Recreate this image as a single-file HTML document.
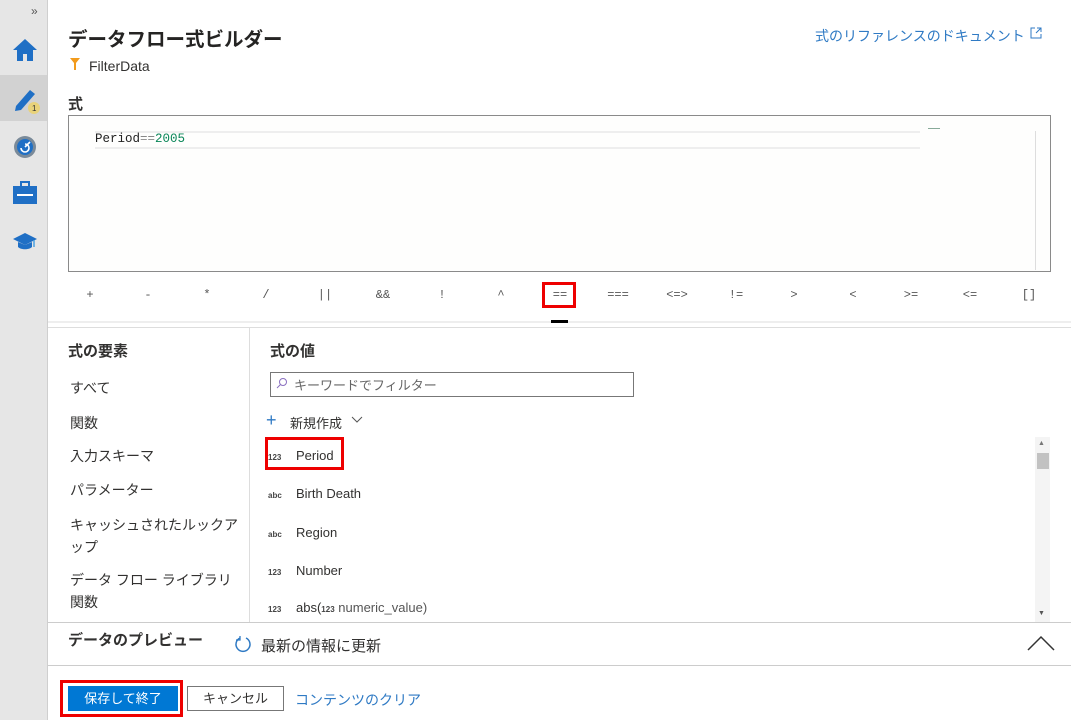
<!DOCTYPE html>
<html><head><meta charset="utf-8"><style>
*{margin:0;padding:0;box-sizing:border-box}
body{width:1071px;height:720px;position:relative;overflow:hidden;background:#fff;font-family:"Liberation Sans","Noto Sans CJK JP",sans-serif;color:#323130}
.a{position:absolute;white-space:nowrap}
.op{position:absolute;top:288px;font-family:"Liberation Mono",monospace;font-size:12px;color:#555;transform:translateX(-50%)}
.it{position:absolute;left:70px;font-size:14px;color:#323130}
.ty{position:absolute;left:268px;font-size:8px;color:#444;font-weight:bold}
.nm{position:absolute;left:296px;font-size:13px;color:#323130}
</style></head><body>
<div class="a" style="left:0;top:0;width:48px;height:720px;background:#e6e6e6;border-right:1px solid #cfcfcf"></div>
<div class="a" style="left:0;top:75px;width:47px;height:46px;background:#d2d2d2"></div>
<div class="a" style="left:31px;top:4px;font-size:12px;color:#555">»</div>
<svg class="a" style="left:12px;top:38px" width="26" height="24" viewBox="0 0 26 24"><path d="M13 1L1 12h4v11h6v-7h4v7h6V12h4z" fill="#1f6fc5"/></svg>
<svg class="a" style="left:12px;top:84px" width="30" height="30" viewBox="0 0 30 30"><path d="M4 22L18 6l5 4L9 26l-6 1z" fill="#1f6fc5"/><circle cx="22" cy="24" r="6" fill="#e8d27a"/><text x="20" y="27" font-size="8" fill="#333">1</text></svg>
<svg class="a" style="left:13px;top:135px" width="24" height="24"><circle cx="12" cy="12" r="11" fill="#7a8a99"/><circle cx="12" cy="12" r="8" fill="#1f6fc5"/><path d="M8 13a4 4 0 1 0 4-4M12 12l5-5" stroke="#fff" stroke-width="1.6" fill="none"/></svg>
<svg class="a" style="left:12px;top:181px" width="26" height="24"><rect x="1" y="5" width="24" height="18" fill="#1f6fc5"/><rect x="9" y="1" width="8" height="5" fill="none" stroke="#1f6fc5" stroke-width="2"/><path d="M5 14h16" stroke="#fff" stroke-width="2"/></svg>
<svg class="a" style="left:12px;top:232px" width="26" height="20"><path d="M13 1L1 7l12 6 12-6z" fill="#1f6fc5"/><path d="M6 10v5c3 3 11 3 14 0v-5l-7 3z" fill="#1f6fc5"/><path d="M22 8v7" stroke="#4aa0e0" stroke-width="1.5"/></svg>

<div class="a" style="left:68px;top:23px;font-size:19.5px;font-weight:bold;color:#252423">データフロー式ビルダー</div>
<div class="a" style="left:815px;top:26px;font-size:14px;color:#2f7ac4">式のリファレンスのドキュメント</div>
<svg class="a" style="left:1030px;top:27px" width="12" height="12"><path d="M5 1H1v10h10V7M7 1h4v4M11 1L6 6" stroke="#2f7ac4" fill="none"/></svg>
<svg class="a" style="left:70px;top:58px" width="10" height="12"><path d="M0 0h10L6 5v7H4V5z" fill="#f29b1c"/></svg>
<div class="a" style="left:89px;top:58px;font-size:14px">FilterData</div>
<div class="a" style="left:68px;top:93px;font-size:15px;font-weight:bold">式</div>

<div class="a" style="left:68px;top:115px;width:983px;height:157px;border:1px solid #8a8a8a;background:#fefefd"></div>
<div class="a" style="left:95px;top:131px;width:825px;height:18px;border-top:2px solid #eee;border-bottom:2px solid #eee"></div>
<div class="a" style="left:95px;top:132px;font-family:'Liberation Mono',monospace;font-size:12.5px;color:#222">Period<span style="color:#888">==</span><span style="color:#098658">2005</span></div>
<div class="a" style="left:928px;top:128px;width:12px;height:1px;background:#8a9"></div>
<div class="a" style="left:1035px;top:131px;width:1px;height:139px;background:#ddd"></div>

<div class="op" style="left:90px">+</div><div class="op" style="left:148px">-</div><div class="op" style="left:207px">*</div><div class="op" style="left:266px">/</div><div class="op" style="left:325px">||</div><div class="op" style="left:383px">&amp;&amp;</div><div class="op" style="left:442px">!</div><div class="op" style="left:501px">^</div><div class="op" style="left:560px">==</div><div class="op" style="left:618px">===</div><div class="op" style="left:677px">&lt;=&gt;</div><div class="op" style="left:736px">!=</div><div class="op" style="left:794px">&gt;</div><div class="op" style="left:853px">&lt;</div><div class="op" style="left:911px">&gt;=</div><div class="op" style="left:970px">&lt;=</div><div class="op" style="left:1029px">[]</div>
<div class="a" style="left:542px;top:282px;width:34px;height:26px;border:3px solid #e00"></div>
<div class="a" style="left:48px;top:321px;width:1023px;height:2px;background:#eee"></div>
<div class="a" style="left:551px;top:320px;width:17px;height:3px;background:#000"></div>
<div class="a" style="left:48px;top:327px;width:1023px;height:1px;background:#ddd"></div>
<div class="a" style="left:249px;top:328px;width:1px;height:294px;background:#ddd"></div>

<div class="a" style="left:68px;top:340px;font-size:15px;font-weight:bold">式の要素</div>
<div class="it" style="top:378px">すべて</div>
<div class="it" style="top:413px">関数</div>
<div class="it" style="top:446px">入力スキーマ</div>
<div class="it" style="top:480px">パラメーター</div>
<div class="it" style="top:514px;line-height:22px">キャッシュされたルックア<br>ップ</div>
<div class="it" style="top:569px;line-height:22px">データ フロー ライブラリ<br>関数</div>

<div class="a" style="left:270px;top:340px;font-size:15px;font-weight:bold">式の値</div>
<div class="a" style="left:270px;top:372px;width:364px;height:25px;border:1px solid #777"></div>
<svg class="a" style="left:276px;top:377px" width="12" height="12"><circle cx="7" cy="5" r="3.5" stroke="#8a6fc0" fill="none"/><path d="M4.5 7.5L1 11" stroke="#8a6fc0"/></svg>
<div class="a" style="left:294px;top:375px;font-size:13px;color:#666">キーワードでフィルター</div>
<div class="a" style="left:266px;top:410px;font-size:18px;color:#2f7ac4;font-weight:300">+</div>
<div class="a" style="left:290px;top:413px;font-size:13px">新規作成</div>
<svg class="a" style="left:351px;top:416px" width="12" height="8"><path d="M1 1l5 5 5-5" stroke="#555" fill="none"/></svg>
<div class="ty" style="top:453px">123</div><div class="nm" style="top:448px">Period</div>
<div class="a" style="left:265px;top:437px;width:79px;height:33px;border:3px solid #e00"></div>
<div class="ty" style="top:491px">abc</div><div class="nm" style="top:486px">Birth Death</div>
<div class="ty" style="top:530px">abc</div><div class="nm" style="top:525px">Region</div>
<div class="ty" style="top:568px">123</div><div class="nm" style="top:563px">Number</div>
<div class="ty" style="top:605px">123</div><div class="nm" style="top:600px">abs(<span style="font-size:8px;font-weight:bold;color:#444">123</span> <span style="color:#555">numeric_value)</span></div>
<div class="a" style="left:1035px;top:437px;width:15px;height:185px;background:#f4f4f4"></div>
<div class="a" style="left:1038px;top:440px;font-size:7px;color:#777">▲</div>
<div class="a" style="left:1037px;top:453px;width:12px;height:16px;background:#c2c2c2"></div>
<div class="a" style="left:1038px;top:610px;font-size:7px;color:#555">▼</div>

<div class="a" style="left:48px;top:622px;width:1023px;height:1px;background:#ccc"></div>
<div class="a" style="left:68px;top:629px;font-size:15px;font-weight:bold">データのプレビュー</div>
<svg class="a" style="left:234px;top:635px" width="18" height="18"><path d="M6 3A7 7 0 1 0 12 3" stroke="#2f7ac4" stroke-width="1.5" fill="none"/><path d="M6 1v4H2" stroke="#2f7ac4" stroke-width="1.3" fill="none"/></svg>
<div class="a" style="left:261px;top:635px;font-size:15px">最新の情報に更新</div>
<svg class="a" style="left:1027px;top:635px" width="28" height="16"><path d="M1 15L14 2l13 13" stroke="#333" stroke-width="1.5" fill="none"/></svg>
<div class="a" style="left:48px;top:665px;width:1023px;height:1px;background:#ccc"></div>

<div class="a" style="left:60px;top:680px;width:123px;height:37px;border:3px solid #e00"></div>
<div class="a" style="left:68px;top:686px;width:110px;height:25px;background:#0078d4;color:#fff;font-size:13px;text-align:center;line-height:25px">保存して終了</div>
<div class="a" style="left:187px;top:686px;width:97px;height:25px;border:1px solid #777;font-size:13px;text-align:center;line-height:23px">キャンセル</div>
<div class="a" style="left:295px;top:690px;font-size:14px;color:#2f7ac4">コンテンツのクリア</div>
</body></html>
